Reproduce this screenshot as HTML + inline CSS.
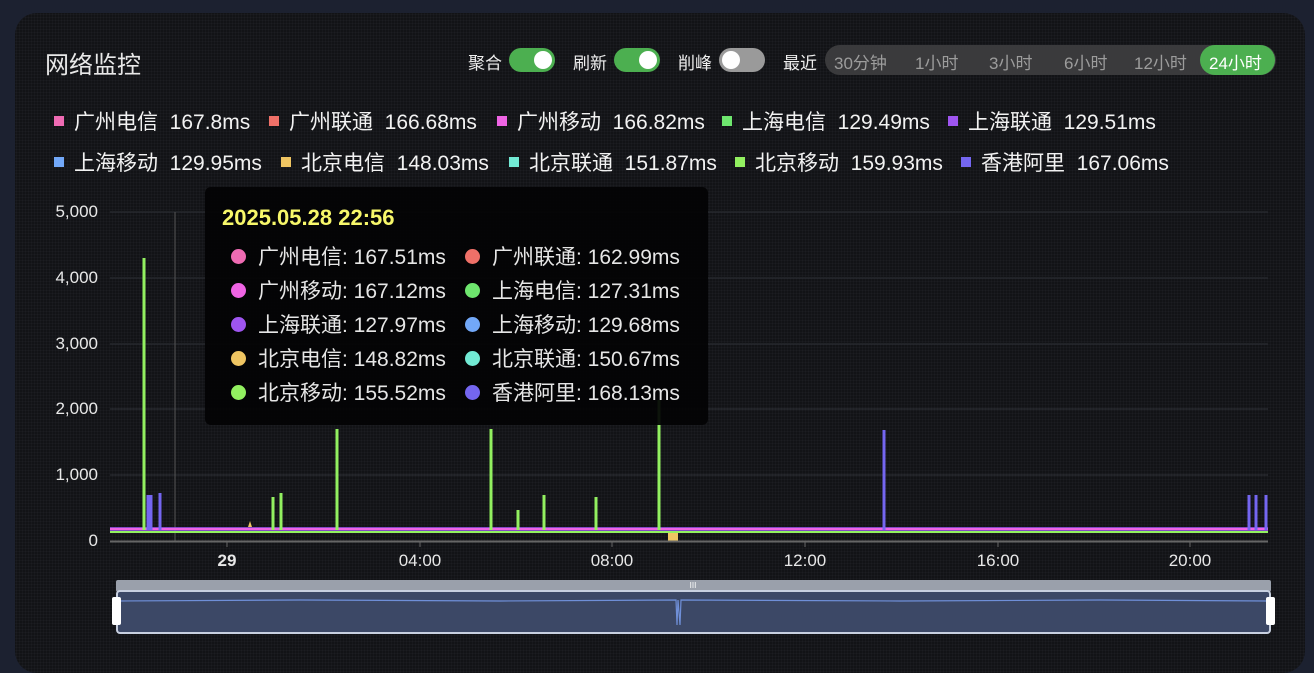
<!DOCTYPE html>
<html><head><meta charset="utf-8"><style>
*{margin:0;padding:0;box-sizing:border-box}
body{width:1314px;height:660px;background:#1c2130;font-family:"Liberation Sans","Noto Sans CJK SC",sans-serif;position:relative;overflow:hidden;color:#eee}
.card{position:absolute;left:15px;top:13px;width:1290px;height:660px;background:#121316;border-radius:22px;background-image:radial-gradient(#1c1d21 1px,transparent 1px);background-size:3px 3px}
.a{position:absolute;white-space:nowrap}
.sw{position:absolute;width:46px;height:24px;border-radius:12px}
.sw i{position:absolute;top:3px;width:18px;height:18px;border-radius:9px;background:#fff}
.lg{position:absolute;font-size:21px;color:#f2f2f2;white-space:nowrap}
.lg b{display:inline-block;width:10px;height:10px;margin-right:10px;vertical-align:3px}
.tt{position:absolute;left:205px;top:187px;width:503px;height:238px;background:rgba(3,3,4,.93);border-radius:6px}
.row{position:absolute;font-size:21px;color:#e6e6e6;white-space:nowrap}
.row b{display:inline-block;width:15px;height:15px;border-radius:8px;margin-right:12px;vertical-align:0px}
.ax{position:absolute;font-size:17px;color:#e8e8e8;text-align:right;width:60px}
.xl{position:absolute;font-size:17px;color:#e8e8e8;top:551px;width:80px;text-align:center}
.c{font-size:17px}
</style></head><body>
<div class="card"></div>
<div class="a" style="left:45px;top:45px;font-size:24px;color:#e8e8e8">网络监控</div>
<div class="a c" style="left:468px;top:49px">聚合</div>
<div class="sw" style="left:509px;top:48px;background:#4caf50"><i style="left:25px"></i></div>
<div class="a c" style="left:573px;top:49px">刷新</div>
<div class="sw" style="left:614px;top:48px;background:#4caf50"><i style="left:25px"></i></div>
<div class="a c" style="left:678px;top:49px">削峰</div>
<div class="sw" style="left:719px;top:48px;background:#9a9a9a"><i style="left:3px"></i></div>
<div class="a c" style="left:783px;top:49px">最近</div>
<div class="a" style="left:825px;top:45px;width:451px;height:30px;border-radius:15px;background:#3a3a3c"></div>
<div class="a" style="left:1200px;top:45px;width:75px;height:30px;border-radius:15px;background:#4caf50"></div>
<div class="a c" style="left:834px;top:49px;color:#9c9c9c">30分钟</div>
<div class="a c" style="left:915px;top:49px;color:#9c9c9c">1小时</div>
<div class="a c" style="left:989px;top:49px;color:#9c9c9c">3小时</div>
<div class="a c" style="left:1064px;top:49px;color:#9c9c9c">6小时</div>
<div class="a c" style="left:1134px;top:49px;color:#9c9c9c">12小时</div>
<div class="a c" style="left:1209px;top:49px;color:#fff">24小时</div>

<div class="lg" style="left:54px;top:106px"><b style="background:#ef6bb3"></b>广州电信&nbsp; 167.8ms</div>
<div class="lg" style="left:269px;top:106px"><b style="background:#ef7068"></b>广州联通&nbsp; 166.68ms</div>
<div class="lg" style="left:497px;top:106px"><b style="background:#ef64e4"></b>广州移动&nbsp; 166.82ms</div>
<div class="lg" style="left:722px;top:106px"><b style="background:#6ee66e"></b>上海电信&nbsp; 129.49ms</div>
<div class="lg" style="left:948px;top:106px"><b style="background:#9f55f0"></b>上海联通&nbsp; 129.51ms</div>
<div class="lg" style="left:54px;top:147px"><b style="background:#72a8f8"></b>上海移动&nbsp; 129.95ms</div>
<div class="lg" style="left:281px;top:147px"><b style="background:#efc562"></b>北京电信&nbsp; 148.03ms</div>
<div class="lg" style="left:509px;top:147px"><b style="background:#72ead4"></b>北京联通&nbsp; 151.87ms</div>
<div class="lg" style="left:735px;top:147px"><b style="background:#92f060"></b>北京移动&nbsp; 159.93ms</div>
<div class="lg" style="left:961px;top:147px"><b style="background:#7466f0"></b>香港阿里&nbsp; 167.06ms</div>

<div class="ax" style="left:38px;top:202px">5,000</div>
<div class="ax" style="left:38px;top:268px">4,000</div>
<div class="ax" style="left:38px;top:334px">3,000</div>
<div class="ax" style="left:38px;top:399px">2,000</div>
<div class="ax" style="left:38px;top:465px">1,000</div>
<div class="ax" style="left:38px;top:531px">0</div>

<svg class="a" style="left:0;top:0" width="1314" height="660">
<g stroke="#2e3036" stroke-width="1">
<line x1="110" y1="212" x2="1268" y2="212"/><line x1="110" y1="278" x2="1268" y2="278"/>
<line x1="110" y1="344" x2="1268" y2="344"/><line x1="110" y1="409" x2="1268" y2="409"/>
<line x1="110" y1="475" x2="1268" y2="475"/></g>
<line x1="175" y1="212" x2="175" y2="541" stroke="#555" stroke-width="1"/>
<rect x="110" y="527" width="1158" height="6" fill="#9f55f0" opacity=".8"/>
<rect x="110" y="528" width="1158" height="2" fill="#ef64e4"/>
<rect x="110" y="531" width="1158" height="2" fill="#92f060"/>
<g stroke="#92f060" stroke-width="3">
<line x1="144" y1="530" x2="144" y2="258"/><line x1="273" y1="530" x2="273" y2="497"/><line x1="281" y1="530" x2="281" y2="493"/>
<line x1="337" y1="530" x2="337" y2="429"/><line x1="491" y1="530" x2="491" y2="429"/><line x1="518" y1="530" x2="518" y2="510"/>
<line x1="544" y1="530" x2="544" y2="495"/><line x1="596" y1="530" x2="596" y2="497"/><line x1="659" y1="530" x2="659" y2="400"/></g>
<g stroke="#7466f0" stroke-width="3">
<line x1="148" y1="530" x2="148" y2="495"/><line x1="151" y1="530" x2="151" y2="495"/><line x1="160" y1="530" x2="160" y2="493"/>
<line x1="884" y1="530" x2="884" y2="430"/><line x1="1249" y1="530" x2="1249" y2="495"/><line x1="1256" y1="530" x2="1256" y2="495"/><line x1="1266" y1="530" x2="1266" y2="495"/></g>
<path d="M248 527 L250 521 L252 527Z" fill="#efc562"/>
<rect x="668" y="533" width="10" height="9" fill="#efc562"/>
<line x1="110" y1="541.5" x2="1268" y2="541.5" stroke="#666" stroke-width="2"/>
<g stroke="#666"><line x1="227" y1="541" x2="227" y2="547"/><line x1="420" y1="541" x2="420" y2="547"/><line x1="612" y1="541" x2="612" y2="547"/><line x1="805" y1="541" x2="805" y2="547"/><line x1="998" y1="541" x2="998" y2="547"/><line x1="1190" y1="541" x2="1190" y2="547"/></g>
<rect x="116" y="580" width="1155" height="12" rx="2" fill="#9aa0ab"/>
<text x="693" y="588" font-size="8" fill="#fff" text-anchor="middle" font-family="Liberation Sans">III</text>
<rect x="117" y="591" width="1153" height="42" rx="3" fill="#3c4866" stroke="#c8d0e0" stroke-width="2"/>
<path d="M118 601 L300 600 L500 601 L676 600 L677 625 L678 600 L680 625 L681 600 L900 601 L1100 600 L1268 601" stroke="#6f8fd8" stroke-width="1.2" fill="none"/>
<rect x="112" y="597" width="9" height="28" rx="2" fill="#fff"/>
<rect x="1266" y="597" width="9" height="28" rx="2" fill="#fff"/>
</svg>
<div class="xl" style="left:187px;font-weight:bold">29</div>
<div class="xl" style="left:380px">04:00</div>
<div class="xl" style="left:572px">08:00</div>
<div class="xl" style="left:765px">12:00</div>
<div class="xl" style="left:958px">16:00</div>
<div class="xl" style="left:1150px">20:00</div>

<div class="tt">
<div class="a" style="left:17px;top:18px;font-size:22px;font-weight:bold;color:#f7f76a">2025.05.28 22:56</div>
<div class="row" style="left:26px;top:54px"><b style="background:#ef6bb3"></b>广州电信: 167.51ms</div>
<div class="row" style="left:260px;top:54px"><b style="background:#ef7068"></b>广州联通: 162.99ms</div>
<div class="row" style="left:26px;top:88px"><b style="background:#ef64e4"></b>广州移动: 167.12ms</div>
<div class="row" style="left:260px;top:88px"><b style="background:#6ee66e"></b>上海电信: 127.31ms</div>
<div class="row" style="left:26px;top:122px"><b style="background:#9f55f0"></b>上海联通: 127.97ms</div>
<div class="row" style="left:260px;top:122px"><b style="background:#72a8f8"></b>上海移动: 129.68ms</div>
<div class="row" style="left:26px;top:156px"><b style="background:#efc562"></b>北京电信: 148.82ms</div>
<div class="row" style="left:260px;top:156px"><b style="background:#72ead4"></b>北京联通: 150.67ms</div>
<div class="row" style="left:26px;top:190px"><b style="background:#92f060"></b>北京移动: 155.52ms</div>
<div class="row" style="left:260px;top:190px"><b style="background:#7466f0"></b>香港阿里: 168.13ms</div>
</div>
</body></html>
